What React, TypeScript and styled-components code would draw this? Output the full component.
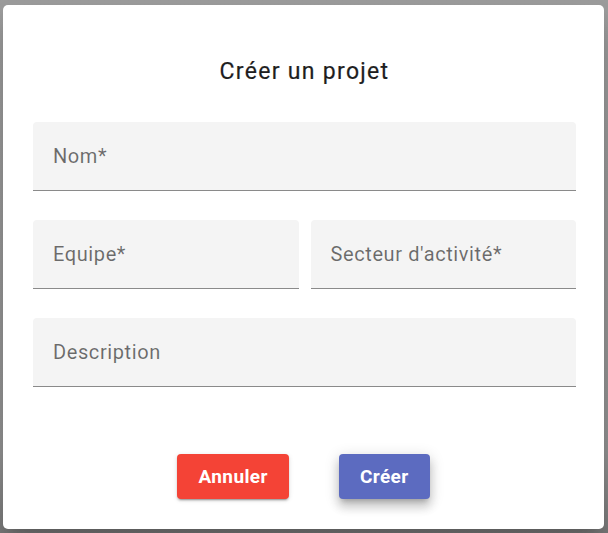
import React from "react";
import styled, { createGlobalStyle } from "styled-components";

const GlobalStyle = createGlobalStyle`
  html, body {
    margin: 0;
    padding: 0;
    font-family: Roboto, "Liberation Sans", sans-serif;
  }
`;

const fields = [
  [{ label: "Nom*" }],
  [{ label: "Equipe*" }, { label: "Secteur d'activité*" }],
  [{ label: "Description" }],
];

const App: React.FC = () => {
  return (
    <>
      <GlobalStyle />
      <Backdrop>
        <Dialog>
          <Title>Créer un projet</Title>
          <Form>
            {fields.map((row, i) => (
              <Row key={i} $cols={row.length}>
                {row.map((f) => (
                  <Field key={f.label}>
                    <Label>{f.label}</Label>
                  </Field>
                ))}
              </Row>
            ))}
          </Form>
          <Actions>
            <Button $color="#f44336">Annuler</Button>
            <Button $color="#5c6bc0" $raised>
              Créer
            </Button>
          </Actions>
        </Dialog>
      </Backdrop>
    </>
  );
};

export default App;

/* ---------------- Styled Components ---------------- */

const Backdrop = styled.div`
  width: 608px;
  height: 533px;
  box-sizing: border-box;
  padding: 5px 4px 4px 3px;
  background: linear-gradient(180deg, #9c9c9c 0%, #929292 85%, #7a7a7a 100%);
`;

const Dialog = styled.div`
  height: 524px;
  box-sizing: border-box;
  background: #fff;
  border-radius: 5px;
  box-shadow: 0 11px 15px -7px rgba(0, 0, 0, 0.2), 0 24px 38px 3px rgba(0, 0, 0, 0.14);
  padding: 51px 28px 0 30px;
  display: flex;
  flex-direction: column;
`;

const Title = styled.h2`
  margin: 0;
  text-align: center;
  font-size: 23px;
  font-weight: 400;
  line-height: 32px;
  color: #1e1e1e;
  letter-spacing: 1.3px;
  -webkit-text-stroke: 0.2px #1e1e1e;
`;

const Form = styled.div`
  margin-top: 34px;
  display: flex;
  flex-direction: column;
  gap: 29px;
`;

const Row = styled.div<{ $cols: number }>`
  display: grid;
  grid-template-columns: repeat(${(p) => p.$cols}, 1fr);
  gap: 12px;
`;

const Field = styled.div`
  height: 69px;
  box-sizing: border-box;
  background: #f4f4f4;
  border-radius: 4px 4px 0 0;
  border-bottom: 1px solid #8a8a8a;
  padding: 0 20px;
  display: flex;
  align-items: center;
`;

const Label = styled.span`
  font-size: 20px;
  color: rgba(0, 0, 0, 0.56);
  letter-spacing: 0.6px;
`;

const Actions = styled.div`
  margin-top: 67px;
  display: flex;
  justify-content: center;
  gap: 50px;
  padding-right: 2px;
`;

const Button = styled.button<{ $color: string; $raised?: boolean }>`
  height: 45px;
  padding: 0 21px;
  border: none;
  border-radius: 4px;
  background: ${(p) => p.$color};
  color: #fff;
  font-family: Roboto, "Liberation Sans", sans-serif;
  font-size: 19px;
  font-weight: 700;
  letter-spacing: 0.4px;
  box-shadow: ${(p) =>
    p.$raised
      ? "0 5px 5px -3px rgba(0,0,0,0.2), 0 8px 10px 1px rgba(0,0,0,0.14), 0 3px 14px 2px rgba(0,0,0,0.12)"
      : "0 3px 1px -2px rgba(0,0,0,0.2), 0 2px 2px 0 rgba(0,0,0,0.14), 0 1px 5px 0 rgba(0,0,0,0.12)"};
  cursor: pointer;
`;
